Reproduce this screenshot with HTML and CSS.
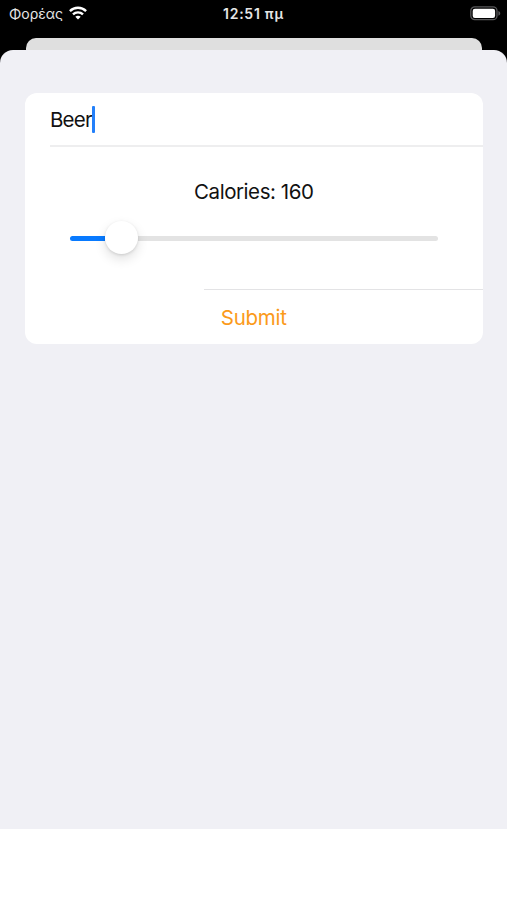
FILE: index.html
```html
<!DOCTYPE html>
<html lang="el">
<head>
<meta charset="utf-8">
<title>Food</title>
<link rel="stylesheet" href="styles.css">
</head>
<body>
<header class="status">
  <div class="carrier">
    <span class="carrier-name">Φορέας</span>
    <svg class="wifi" width="18" height="14" viewBox="0 0 18 14" fill="none" stroke="#fff" stroke-width="2.4">
      <path d="M0.9 5.1C5.4 0.7 12.6 0.7 17.1 5.1"/>
      <path d="M4 8.4C6.8 5.7 11.2 5.7 14 8.4"/>
      <path d="M9 13.6L6.3 10.8C7.8 9.4 10.2 9.4 11.7 10.8Z" fill="#fff" stroke="none"/>
    </svg>
  </div>
  <span class="time">12:51 πμ</span>
  <svg class="battery" width="31" height="15" viewBox="0 0 31 15">
    <rect x="0.8" y="0.9" width="26.2" height="12.8" rx="4" fill="none" stroke="#58585a" stroke-width="1.3"/>
    <rect x="2.7" y="2.7" width="22.4" height="9.2" rx="2.2" fill="#fff"/>
    <path d="M28.4 4.9C30.9 6 30.9 8.6 28.4 9.7Z" fill="#58585a"/>
  </svg>
</header>
<div class="back-sheet"></div>
<main class="sheet">
  <form class="card">
    <div class="row name-row"><span class="name">Beer</span><span class="caret"></span></div>
    <div class="divider thick"></div>
    <div class="calories">
      <div class="label">Calories: 160</div>
      <div class="slider"><div class="fill"></div><div class="knob"></div><div class="rest"></div></div>
    </div>
    <div class="divider short"></div>
    <div class="row submit-row"><span class="submit">Submit</span></div>
  </form>
</main>
</body>
</html>
```
FILE: styles.css
```css
* { box-sizing: border-box; }
body {
  margin: 0;
  height: 900px;
  overflow: hidden;
  display: flex;
  flex-direction: column;
  background: linear-gradient(#000 0 400px, #fff 400px);
  color: #111;
  font-family: Inter, "Liberation Sans", sans-serif;
}
.status {
  height: 38px;
  padding: 5px 6px 0 9px;
  display: grid;
  grid-template-columns: 214px 1fr auto;
  align-items: start;
  color: #e6e6e6;
  font-size: 14px;
  line-height: 18px;
}
.carrier { display: flex; gap: 6px; }
.carrier-name { width: 53.5px; white-space: nowrap; letter-spacing: 0; }
.wifi { margin-top: 1px; }
.time { font-weight: 600; letter-spacing: 0.75px; }
.battery { justify-self: end; margin-top: 1px; }
.back-sheet {
  height: 12px;
  margin: 0 25px 0 26px;
  border-radius: 10px 10px 0 0;
  background: #dfdfdf;
}
.sheet {
  height: 779px;
  padding: 43px 24.5px 0 25px;
  border-radius: 13px 13px 0 0;
  background: #f0f0f5;
}
.card {
  height: 251px;
  border-radius: 12px;
  background: #fff;
  display: flex;
  flex-direction: column;
  font-size: 20.5px;
  line-height: 26px;
}
.row { display: flex; align-items: center; }
.name-row { height: 52px; padding: 1px 0 0 25px; }
.name { letter-spacing: -0.8px; }
.caret { width: 3px; height: 27px; border-radius: 1px; background: #2380fa; }
.divider { height: 1px; margin-left: 25px; background: #e3e3e5; }
.thick { height: 2px; background: #eeeeef; }
.short { margin-left: 179px; }
.calories { height: 142px; padding: 32px 45px 0; }
.label { text-align: center; letter-spacing: -0.45px; }
.slider { display: flex; align-items: center; height: 34px; margin-top: 16px; }
.fill { width: 35px; height: 5px; border-radius: 3px 0 0 3px; background: #087aff; }
.knob {
  width: 33px;
  height: 33px;
  margin-bottom: 2px;
  border-radius: 50%;
  background: #fff;
  box-shadow: 0 5px 12px rgba(0, 0, 0, 0.12), 0 1px 3px rgba(0, 0, 0, 0.12);
  z-index: 1;
}
.rest { flex: 1; height: 5px; border-radius: 0 3px 3px 0; background: #e3e3e3; }
.submit-row { flex: 1; justify-content: center; padding-top: 2px; }
.submit { color: #fb9a1a; letter-spacing: -0.25px; }
```
